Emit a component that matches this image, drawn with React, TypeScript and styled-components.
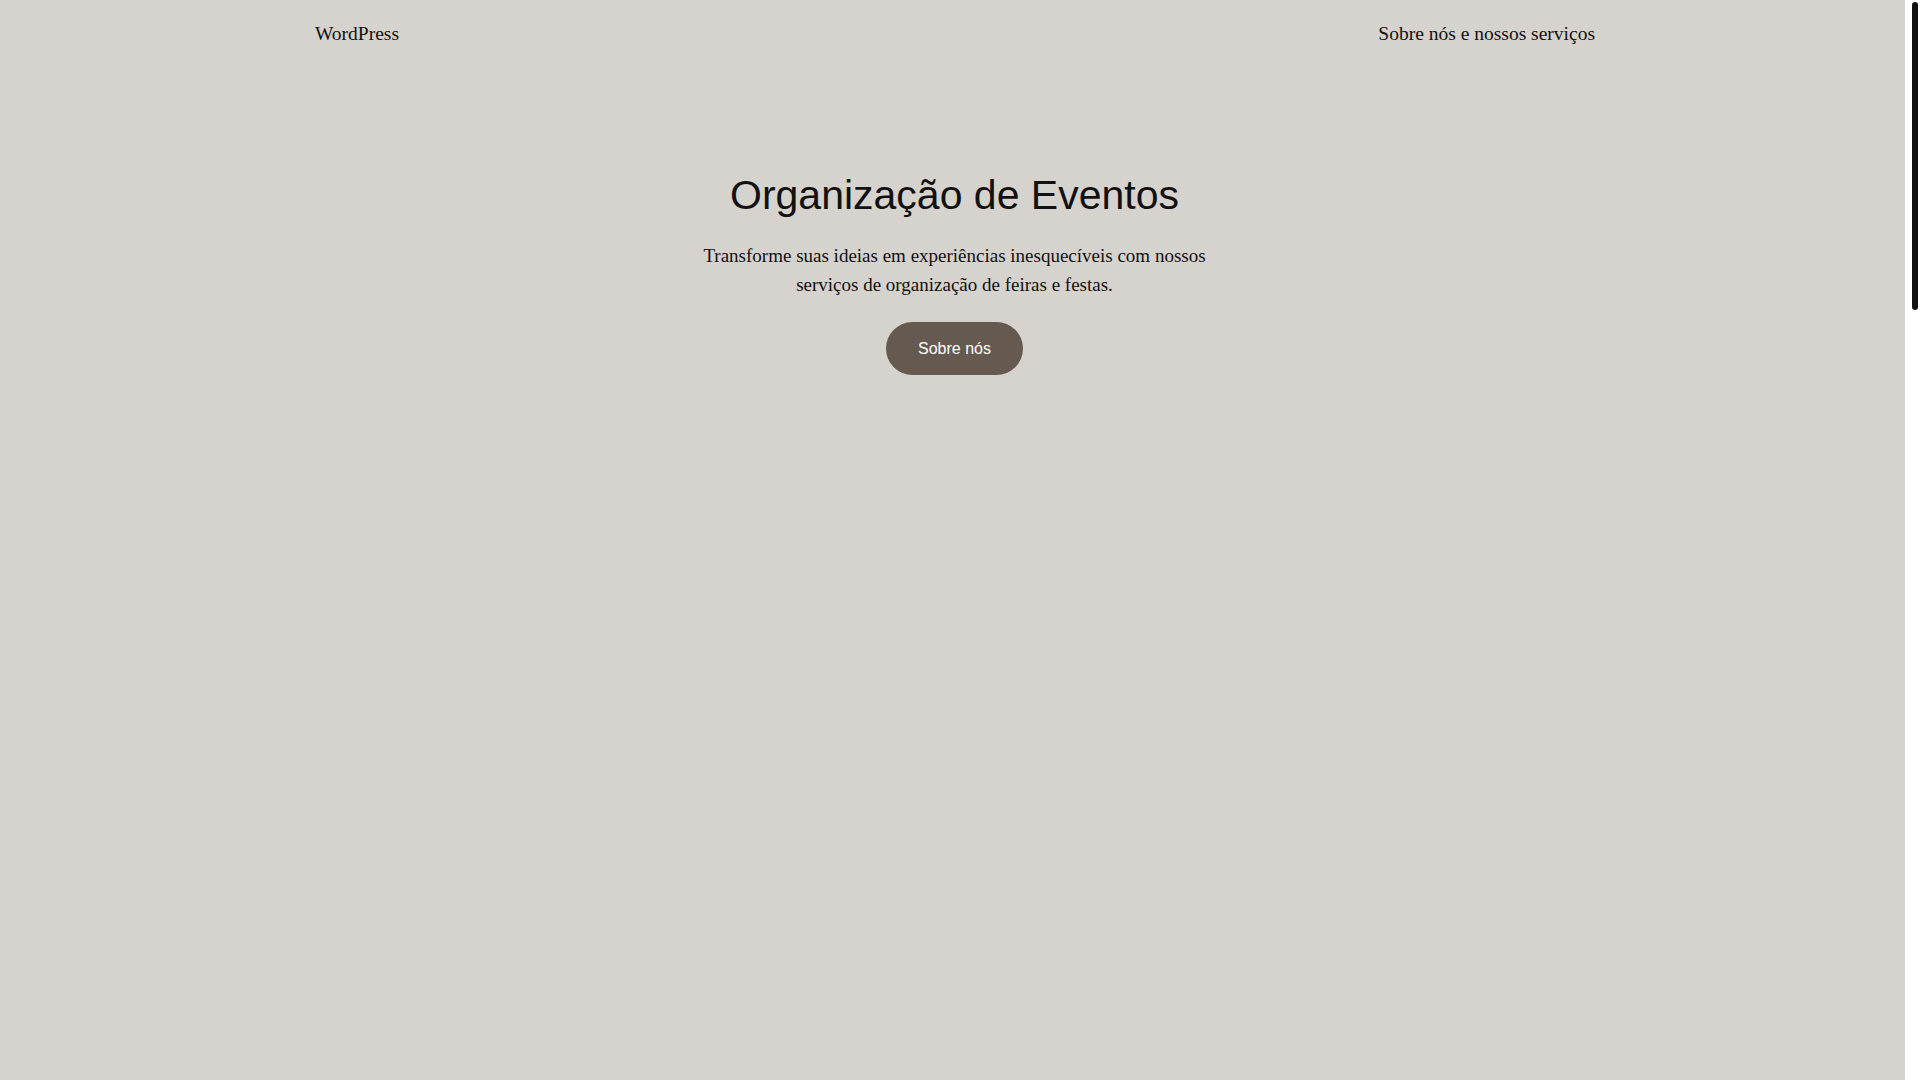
import React from 'react'
import styled, { createGlobalStyle } from 'styled-components'

const GlobalStyle = createGlobalStyle`
  html, body {
    margin: 0;
    padding: 0;
    background-color: #d6d2cd;
    color: #111111;
    font-family: "Liberation Serif", "Times New Roman", serif;
  }
`

const Page = styled.div`
  min-height: 100vh;
  padding: 0 15px 0 4px;
  display: flex;
  flex-direction: column;
`

// browser scrollbar seen on the right edge of the screenshot
const ScrollRail = styled.div`
  position: fixed;
  top: 0;
  right: 0;
  width: 15px;
  height: 100vh;
  background: #ffffff;
`

const ScrollThumb = styled.div`
  position: absolute;
  top: 2px;
  left: 7px;
  width: 6px;
  height: 308px;
  border-radius: 3px;
  background: #111111;
`

const Header = styled.header`
  width: 1280px;
  margin: 0 auto;
  padding: 21px 0 19px 1px;
  display: flex;
  align-items: center;
  justify-content: space-between;
  font-size: 19.5px;
  line-height: 26px;
`

const SiteTitle = styled.a`
  color: #111111;
  text-decoration: none;
`

const Nav = styled.nav`
  display: flex;
  gap: 24px;
`

const NavLink = styled.a`
  color: #111111;
  text-decoration: none;
`

const Hero = styled.section`
  display: flex;
  flex-direction: column;
  align-items: center;
  text-align: center;
  padding-top: 105px;
`

const Title = styled.h1`
  margin: 0;
  font-family: "Liberation Sans", Arial, sans-serif;
  font-weight: 400;
  font-size: 41px;
  line-height: 1.2;
`

const Lead = styled.p`
  margin: 21px 0 0;
  max-width: 530px;
  font-size: 19px;
  line-height: 29px;
`

const Button = styled.a`
  margin-top: 23px;
  display: inline-block;
  padding: 17px 32px;
  border-radius: 999px;
  background-color: #665950;
  color: #ffffff;
  font-family: "Liberation Sans", Arial, sans-serif;
  font-size: 16px;
  line-height: 19px;
  text-decoration: none;
`

const App = () => {
  return (
    <Page>
      <GlobalStyle />
      <Header>
        <SiteTitle href="#">WordPress</SiteTitle>
        <Nav>
          <NavLink href="#sobre">Sobre nós e nossos serviços</NavLink>
        </Nav>
      </Header>

      <Hero>
        <Title>Organização de Eventos</Title>
        <Lead>
          Transforme suas ideias em experiências inesquecíveis com nossos serviços de organização de feiras e festas.
        </Lead>
        <Button href="#sobre">Sobre nós</Button>
      </Hero>

      <ScrollRail>
        <ScrollThumb />
      </ScrollRail>
    </Page>
  )
}

export default App
